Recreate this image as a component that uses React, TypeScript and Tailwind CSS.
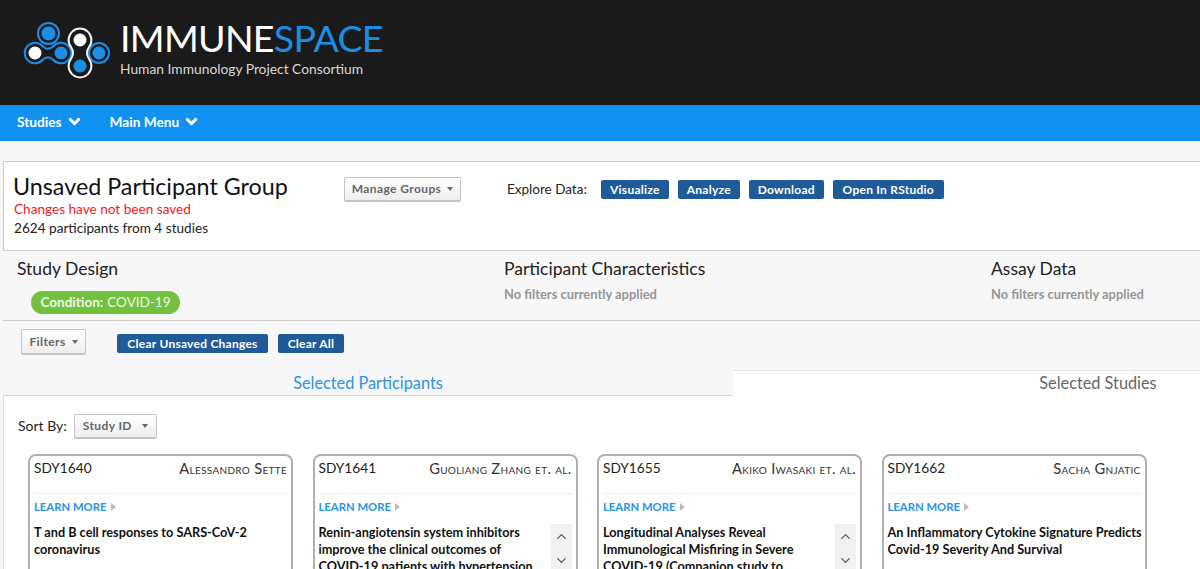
import { ChevronDown, ChevronUp } from 'lucide-react'

const font = "font-['Lato','Open_Sans',sans-serif]"

const studies = [
  {
    id: 'SDY1640',
    pi: 'Alessandro Sette',
    title: 'T and B cell responses to SARS-CoV-2 coronavirus',
    scroll: false,
  },
  {
    id: 'SDY1641',
    pi: 'Guoliang Zhang et. al.',
    title: 'Renin-angiotensin system inhibitors improve the clinical outcomes of COVID-19 patients with hypertension',
    scroll: true,
  },
  {
    id: 'SDY1655',
    pi: 'Akiko Iwasaki et. al.',
    title: 'Longitudinal Analyses Reveal Immunological Misfiring in Severe COVID-19 (Companion study to',
    scroll: true,
  },
  {
    id: 'SDY1662',
    pi: 'Sacha Gnjatic',
    title: 'An Inflammatory Cytokine Signature Predicts Covid-19 Severity And Survival',
    scroll: false,
  },
]

function Logo() {
  return (
    <svg width="100" height="70" viewBox="23 18 100 70" className="shrink-0">
      <g fill="#1a1a1a" stroke="#1b8fe6" strokeWidth="2">
        <path d="M43 46.5 A10.3 10.3 0 1 0 43 59.5 Q48 55 53 59.5 A10.3 10.3 0 1 0 53 46.5 Q48 51 43 46.5 Z" />
        <circle cx="48.5" cy="33.5" r="10.5" />
        <circle cx="99" cy="53" r="10" />
      </g>
      <path
        d="M71 47 A11.4 11.4 0 1 1 89 47 Q85 53 89 59 A11.4 11.4 0 1 1 71 59 Q75 53 71 47 Z"
        fill="#1a1a1a"
        stroke="#f2f2f2"
        strokeWidth="2"
      />
      <circle cx="48.5" cy="33.5" r="7" fill="#1b8fe6" />
      <circle cx="35" cy="53" r="6.5" fill="#fff" />
      <circle cx="61" cy="53" r="6.5" fill="#1b8fe6" />
      <circle cx="80" cy="40" r="6.5" fill="#fff" />
      <circle cx="80" cy="66" r="6.5" fill="#1b8fe6" />
      <circle cx="99" cy="53" r="6.5" fill="#1b8fe6" />
    </svg>
  )
}

function Caret({ className }: { className: string }) {
  return <span className={`inline-block border-x-[3.5px] border-t-[4px] border-x-transparent border-t-[#666] align-middle ${className}`} />
}

function BlueButton({ label, className }: { label: string; className: string }) {
  return (
    <button
      type="button"
      className={`flex h-[19px] items-center justify-center rounded-[2px] bg-[#1f5b98] text-[12px] font-bold tracking-[0.25px] text-white ${className}`}
    >
      {label}
    </button>
  )
}

function GreyButton({ label, className, caretGap }: { label: string; className: string; caretGap: string }) {
  return (
    <button
      type="button"
      className={`flex items-center justify-center rounded-[2px] border border-b-2 border-[#c4c4c4] bg-gradient-to-b from-white to-[#eeeeee] text-[12px] font-bold tracking-[0.4px] text-[#666] ${className}`}
    >
      {label}
      <Caret className={caretGap} />
    </button>
  )
}

function StudyCard({ id, pi, title, scroll }: (typeof studies)[number]) {
  return (
    <div className="h-[180px] w-[265px] shrink-0 rounded-lg border-2 border-[#b0b0b0] bg-white px-[4px]">
      <div className="flex h-[38px] items-start justify-between border-b border-[#eeeeee] pt-[2px]">
        <span className="text-[13.7px] leading-[20px] text-[#222]">{id}</span>
        <span className="text-[14.7px] leading-[20px] tracking-[0.3px] text-[#333] [font-variant:small-caps]">{pi}</span>
      </div>
      <div className="mt-[6px] flex items-center gap-1 text-[11.3px] font-bold leading-[14px] text-[#2a93e3]">
        LEARN MORE
        <span className="border-y-[4px] border-l-[5px] border-y-transparent border-l-[#bbb]" />
      </div>
      <div className="mt-[10px] flex gap-1">
        <p className={`flex-1 text-[12.7px] font-bold leading-[17px] text-[#111] ${scroll ? '' : '-mr-1'}`}>{title}</p>
        {scroll && (
          <div className="flex h-[60px] w-[21px] shrink-0 flex-col items-center gap-[9px] bg-[#f1f1f1] pt-[5px] text-[#555]">
            <ChevronUp size={15} />
            <ChevronDown size={15} />
          </div>
        )}
      </div>
    </div>
  )
}

export default function App() {
  return (
    <div className={`h-[569px] w-[1200px] overflow-hidden bg-[#f7f7f7] ${font}`}>
      <header className="flex h-[105px] items-start bg-[#1a1a1a] pl-[23px] pt-[18px]">
        <Logo />
        <div className="text-white">
          <div className="-ml-[3px] mt-[-3px] text-[37.5px] leading-[46px] tracking-[-0.7px]">
            IMMUNE<span className="text-[#1b8fe6]">SPACE</span>
          </div>
          <div className="-ml-[3px] mt-[-1px] text-[13.8px] leading-[18px] text-[#d8d8d8]">Human Immunology Project Consortium</div>
        </div>
      </header>

      <nav className="flex h-[36px] items-center gap-[27px] bg-[#1192f2] pb-[2px] pl-[17px] text-[13.7px] font-bold text-white">
        <span className="flex items-center gap-1">
          Studies <ChevronDown size={17} strokeWidth={4} />
        </span>
        <span className="flex items-center gap-1">
          Main Menu <ChevronDown size={17} strokeWidth={4} />
        </span>
      </nav>

      <main className="ml-[3px] mt-[20px] w-[1460px]">
        <section className="flex h-[90px] items-start border border-[#cccccc] bg-white pl-[10px]">
          <div className="w-[330px] pt-[9px]">
            <h1 className="-ml-[1px] text-[23.3px] leading-[30px] text-[#111]">Unsaved Participant Group</h1>
            <p className="-mt-[1px] text-[13.6px] leading-[19px] text-[#ee1c25]">Changes have not been saved</p>
            <p className="text-[13.6px] leading-[19px] text-[#222]">2624 participants from 4 studies</p>
          </div>
          <div className="flex items-center pt-[15px]">
            <GreyButton label="Manage Groups" className="h-[25px] w-[117px]" caretGap="ml-1.5" />
            <span className="ml-[46px] mr-[14px] text-[13.5px] text-[#222]">Explore Data:</span>
            <div className="flex gap-[9px]">
              <BlueButton label="Visualize" className="w-[68px]" />
              <BlueButton label="Analyze" className="w-[62px]" />
              <BlueButton label="Download" className="w-[75px]" />
              <BlueButton label="Open In RStudio" className="w-[111px]" />
            </div>
          </div>
        </section>

        <section className="grid h-[70px] grid-cols-[487px_487px_1fr] border-b border-[#cccccc] pl-[14px] pt-[7px]">
          <div>
            <h2 className="text-[17.5px] leading-[22px] text-[#222]">Study Design</h2>
            <span className="ml-[14px] mt-[11px] inline-flex h-[23px] w-[149px] items-center justify-center rounded-full bg-[#72c23f] text-[13.5px] text-[#eef8e6]">
              <b className="mr-1 font-bold">Condition:</b> COVID-19
            </span>
          </div>
          <div>
            <h2 className="text-[17.5px] leading-[22px] text-[#222]">Participant Characteristics</h2>
            <p className="mt-[6px] text-[12.9px] font-bold leading-[16px] text-[#969696]">No filters currently applied</p>
          </div>
          <div>
            <h2 className="text-[17.5px] leading-[22px] text-[#222]">Assay Data</h2>
            <p className="mt-[6px] text-[12.9px] font-bold leading-[16px] text-[#969696]">No filters currently applied</p>
          </div>
        </section>

        <section className="flex h-[49px] items-start pl-[18px] pt-[8px]">
          <GreyButton label="Filters" className="h-[26px] w-[65px]" caretGap="ml-1.5" />
          <div className="ml-[31px] mt-[5px] flex gap-[10px]">
            <BlueButton label="Clear Unsaved Changes" className="w-[151px]" />
            <BlueButton label="Clear All" className="w-[66px]" />
          </div>
        </section>

        <div className="grid grid-cols-2">
          <div className="flex h-[26px] items-center justify-center border-b border-[#d6d6d6] pt-[2px] text-[16.3px] text-[#2a93e3]">
            Selected Participants
          </div>
          <div className="flex h-[26px] items-center justify-center border-t border-[#e4e4e4] bg-white text-[16.3px] text-[#666]">
            Selected Studies
          </div>
        </div>

        <section className="h-[200px] border-l border-[#dddddd] bg-white pl-[14px] pt-[18px]">
          <div className="flex items-center gap-[7px]">
            <span className="pb-[3px] text-[14px] text-[#222]">Sort By:</span>
            <GreyButton label="Study ID" className="h-[25px] w-[83px]" caretGap="ml-2.5" />
          </div>
          <div className="ml-[10px] mt-[15px] flex gap-[19.5px]">
            {studies.map((s) => (
              <StudyCard key={s.id} {...s} />
            ))}
          </div>
        </section>
      </main>
    </div>
  )
}
